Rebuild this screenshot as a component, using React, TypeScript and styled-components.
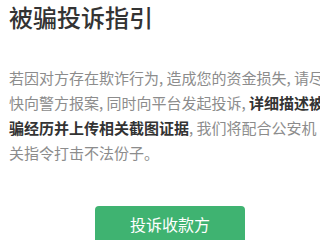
import styled, { createGlobalStyle } from "styled-components";

const Global = createGlobalStyle`
  html, body {
    margin: 0;
    padding: 0;
    background: #fff;
    overflow: hidden;
  }
  body {
    font-family: "Noto Sans CJK SC", "Noto Sans", sans-serif;
  }
`;

const Page = styled.div`
  width: 340px;
  box-sizing: border-box;
  padding: 1px 9px 0;
  display: flex;
  flex-direction: column;
`;

const Title = styled.h1`
  margin: 0;
  font-size: 24px;
  font-weight: 500;
  line-height: 32px;
  color: #333;
`;

const Body = styled.p`
  margin: 32px 0 0;
  font-size: 15px;
  line-height: 25px;
  color: #8c8c8c;
`;

const Line = styled.span`
  display: block;
  white-space: nowrap;
`;

const Strong = styled.b`
  font-weight: 700;
  color: #333;
`;

const Actions = styled.div`
  display: flex;
  justify-content: center;
  margin-top: 41px;
`;

const Button = styled.button`
  width: 150px;
  height: 40px;
  border: none;
  border-radius: 4px;
  background: #3fb371;
  color: #fff;
  font-family: inherit;
  font-size: 16px;
  line-height: 36px;
  padding: 0 0 4px;
  cursor: pointer;
`;

export default function App() {
  return (
    <Page>
      <Global />
      <Title>被骗投诉指引</Title>
      <Body>
        <Line>若因对方存在欺诈行为, 造成您的资金损失, 请尽</Line>
        <Line>
          快向警方报案, 同时向平台发起投诉, <Strong>详细描述被</Strong>
        </Line>
        <Line>
          <Strong>骗经历并上传相关截图证据</Strong>, 我们将配合公安机
        </Line>
        <Line>关指令打击不法份子。</Line>
      </Body>
      <Actions>
        <Button>投诉收款方</Button>
      </Actions>
    </Page>
  );
}
